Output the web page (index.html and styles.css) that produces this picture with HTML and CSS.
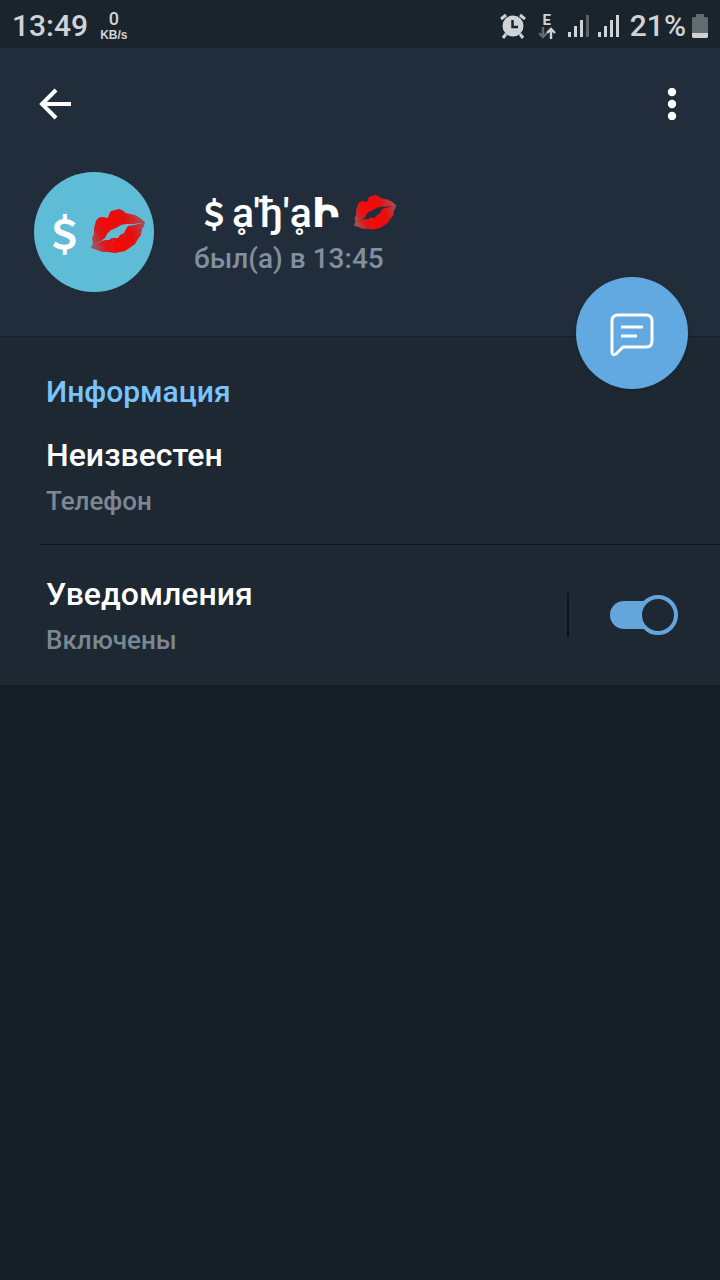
FILE: index.html
```html
<!DOCTYPE html>
<html lang="ru">
<head>
<meta charset="utf-8">
<meta name="viewport" content="width=device-width, initial-scale=1">
<title>Профиль</title>
<link rel="stylesheet" href="styles.css">
</head>
<body>
<svg class="defs" aria-hidden="true">
  <defs>
    <linearGradient id="lip" x1="0" y1=".7" x2="1" y2=".3">
      <stop offset="0" stop-color="#a8505a"/>
      <stop offset=".18" stop-color="#d81a1a"/>
      <stop offset=".35" stop-color="#f40a08"/>
      <stop offset=".7" stop-color="#e60f0d"/>
      <stop offset="1" stop-color="#a8505a"/>
    </linearGradient>
    <symbol id="kiss" viewBox="0 0 56 46">
      <path fill="url(#lip)" fill-rule="evenodd" d="M1 39 3 34 2 29 4 25 4 19 6 12Q8 8 12 8L18 9Q19 4 21 2L29 0Q33 1 36 4L45 6 50 9 55 13 54 17 52 20 51 26 48 30 45 35 41 38 35 42 25 44 18 43 12 43 7 41ZM4 36 11 32 15 29 17 25 21 21 26 19 31 16 36 15 42 15 53 14 44 16 38 17 36 20 34 24 30 26 28 29 22 29 19 31 15 31 12 32Z"/>
      <path d="m15 31 1 3M22 29l1 4M34 24l1 3M39 15l2-3" stroke="#a84c54" stroke-width=".8"/>
    </symbol>
  </defs>
</svg>
<div class="status">
  <span class="clock">13:49</span>
  <span class="speed"><b>0</b><small>KB/s</small></span>
  <span class="indicators">
    <svg width="26" height="26" viewBox="0 0 26 26" fill="none" stroke="#d0d3d5">
      <path d="m1 6 5-4M25 6l-5-4M6 21l-3 4M20 21l3 4" stroke-width="3"/>
      <circle cx="13" cy="13" r="10.500" fill="#d0d3d5" stroke="none"/>
      <path d="M12.500 7v7H18" stroke="#1b252d" stroke-width="2.500"/>
    </svg>
    <span class="edge">E
      <svg width="18" height="12" viewBox="0 0 18 12" fill="none" stroke-width="2.400">
        <path d="M5 0v10M1 6l4 4 4-4" stroke="#626b72"/><path d="M13 12V2M9 6l4-4 4 4" stroke="#d0d3d5"/>
      </svg>
    </span>
    <svg width="22" height="24" viewBox="0 0 22 24" fill="#d0d3d5"><path d="M0 18h3v5H0zM6 12h3v11H6zM12 6h3v17h-3z"/><path d="M18 1h3v22h-3z" fill="#59636b"/></svg>
    <svg width="22" height="24" viewBox="0 0 22 24" fill="#d0d3d5"><path d="M0 18h3v5H0zM6 12h3v11H6zM12 6h3v17h-3zM18 1h3v22h-3z"/></svg>
    <span class="battery">
      <span class="charge">21%</span>
      <svg width="16" height="24" viewBox="0 0 16 24"><path d="M4 0h8v3h3l1 1v15H0V4l1-1h3z" fill="#626b72"/><path d="M0 19h16v4l-1 1H1l-1-1z" fill="#d0d3d5"/></svg>
    </span>
  </span>
</div>

<header class="head">
  <nav class="toolbar">
    <button class="icon" aria-label="Назад"><svg width="34" height="32" viewBox="0 0 34 32" fill="none" stroke="#fff" stroke-width="4"><path d="M17 2 3 16l14 14M3 16h29"/></svg></button>
    <button class="icon" aria-label="Ещё"><svg width="34" height="32" viewBox="0 0 34 32" fill="#fff"><circle cx="17" cy="4" r="4.200"/><circle cx="17" cy="16" r="4.200"/><circle cx="17" cy="28" r="4.200"/></svg></button>
  </nav>
  <div class="person">
    <div class="avatar"><span>＄</span><svg class="kiss" viewBox="0 0 56 46"><use href="#kiss"/></svg></div>
    <div class="who">
      <h1><span class="dollar">＄</span><span>ḁ'ђ'ḁ<b>Ի</b></span><svg class="kiss" viewBox="0 0 56 46"><use href="#kiss"/></svg></h1>
      <p>был(а) в 13:45</p>
    </div>
  </div>
  <button class="fab" aria-label="Написать"><svg width="44" height="44" viewBox="0 0 44 44" fill="none" stroke="#fff" stroke-width="3" stroke-linejoin="round" stroke-linecap="round"><path d="M8 2h28q6 0 6 6v20q0 6-6 6H13l-7 7q-4 2-4-2V8q0-6 6-6Z"/><path d="M11 14h22M11 23h16" stroke-linecap="butt"/></svg></button>
</header>

<main class="info">
  <h2>Информация</h2>
  <section class="row phone">
    <div class="text"><strong>Неизвестен</strong><span>Телефон</span></div>
  </section>
  <section class="row notify">
    <label class="text" for="notify"><strong>Уведомления</strong><span>Включены</span></label>
    <span class="bar"></span>
    <input class="switch" id="notify" type="checkbox" role="switch" checked>
  </section>
</main>
</body>
</html>
```

FILE: styles.css
```css
*, *::before, *::after { box-sizing: border-box; }
body { margin: 0; min-height: 100vh; background: #151d25; color: #fff; font-family: Roboto, "Noto Sans", "Noto Sans CJK SC", "DejaVu Sans", sans-serif; font-weight: 500; }
h1, h2, p { margin: 0; }
button { border: 0; padding: 0; background: none; cursor: pointer; }
svg { display: block; flex: none; }
.defs { position: absolute; width: 0; height: 0; }

.status { display: flex; align-items: center; height: 48px; padding: 3px 12px 0; background: #1a242c; color: #d0d3d5; }
.clock, .charge { font-size: 30px; line-height: 45px; }
.speed { display: flex; flex-direction: column; align-items: center; margin-left: 12px; }
.speed b { font-size: 18px; line-height: 19px; font-weight: 500; }
.speed small { padding-top: 1px; font: bold 12px/13px "Liberation Sans", sans-serif; }
.indicators { display: flex; align-items: center; gap: 8px; margin-left: auto; }
.battery { display: flex; align-items: center; gap: 6px; margin-left: 2px; }
.edge { display: flex; flex-direction: column; align-items: center; width: 26px; font-size: 15px; line-height: 14px; font-weight: 700; }

.head { position: relative; height: 289px; border-bottom: 1px solid #18212a; background: #212d3b; }
.toolbar { display: flex; justify-content: space-between; padding: 32px 24px 0 32px; }
.icon { display: grid; place-items: center; width: 48px; height: 48px; }
.person { display: flex; padding: 44px 34px 0; gap: 40px; }
.avatar { display: flex; align-items: center; justify-content: center; gap: 5px; width: 120px; height: 120px; padding-left: 2px; border-radius: 50%; background: #5ebcd6; font-size: 40px; font-weight: 700; }
.avatar .kiss { width: 56px; height: 46px; }
.who { padding-top: 15px; }
h1 { display: flex; align-items: center; font-size: 41px; line-height: 52px; font-weight: 500; }
h1 b { font-weight: 700; font-size: 41px; line-height: 40px; }
h1 .kiss { width: 44px; height: 36px; margin-left: 14px; }
.dollar { padding: 4px 2px 0 4px; font-size: 32px; line-height: 48px; font-weight: 700; }
.who p { color: #81909e; font-size: 28px; line-height: 40px; }
.fab { position: absolute; right: 32px; bottom: -53px; display: grid; place-items: center; width: 112px; height: 112px; padding-top: 4px; border-radius: 50%; background: #61a9e0; box-shadow: 0 1px 3px #151d2560; }

.info { padding: 35px 0 0 40px; background: #1e2832; }
h2 { padding-left: 6px; color: #79c4fc; font-size: 30px; line-height: 40px; font-weight: 500; }
.row { display: flex; align-items: center; padding: 23px 42px 23px 6px; }
.text { flex: 1; display: flex; flex-direction: column; gap: 6px; }
.text strong { font-size: 32px; line-height: 40px; font-weight: 500; }
.text span { color: #7b8894; font-size: 26px; line-height: 40px; }
.phone { border-bottom: 1px solid #0b1219; }
.notify { padding-block: 25px; }
.notify .text { padding-top: 4px; }
.bar { width: 2px; height: 44px; background: #0b1219; }
.switch { appearance: none; position: relative; width: 68px; height: 40px; margin: 0 0 0 41px; cursor: pointer; }
.switch::before { content: ""; position: absolute; inset: 6px 16px 6px 0; border-radius: 14px; background: #64a6dc; }
.switch::after { content: ""; position: absolute; top: 0; right: 0; width: 40px; height: 40px; border: 4px solid #64a6dc; border-radius: 50%; background: #1e2832; }
```
